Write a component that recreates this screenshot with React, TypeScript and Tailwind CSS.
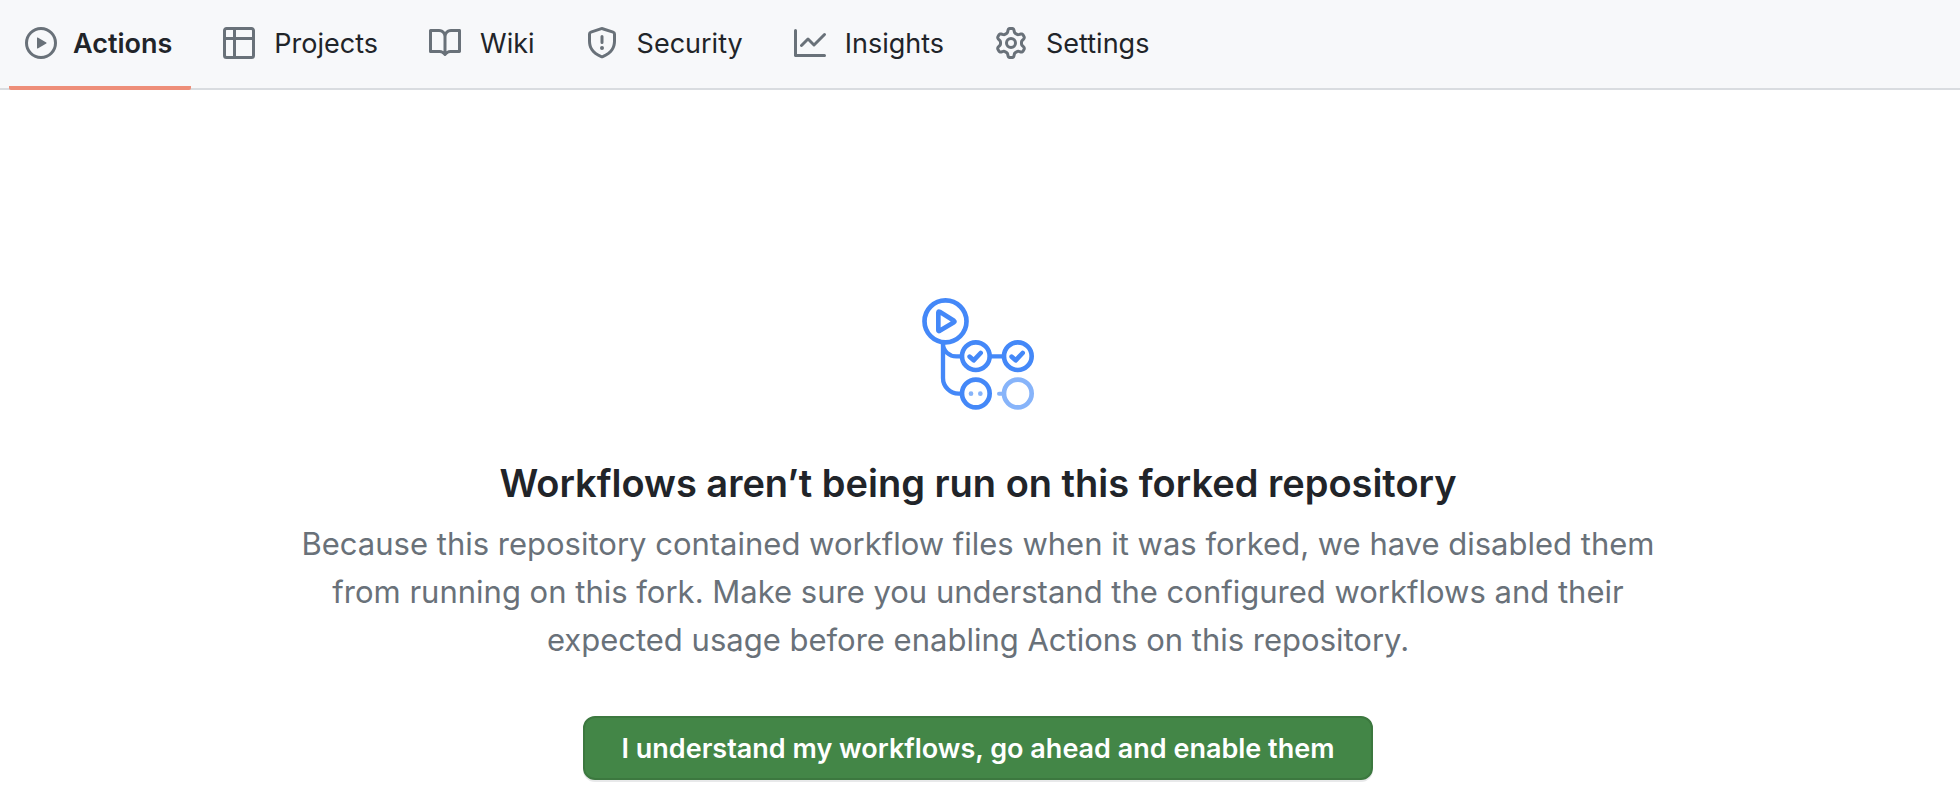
import type { ReactNode } from "react";

type Tab = { label: string; path: string; current?: boolean };

const tabs: Tab[] = [
  {
    label: "Actions",
    current: true,
    path: "M1.5 8a6.5 6.5 0 1113 0 6.5 6.5 0 01-13 0zM8 0a8 8 0 100 16A8 8 0 008 0zM6.379 5.227A.25.25 0 006 5.442v5.117a.25.25 0 00.379.214l4.264-2.559a.25.25 0 000-.428L6.379 5.227z",
  },
  {
    label: "Projects",
    path: "M0 1.75C0 .784.784 0 1.75 0h12.5C15.216 0 16 .784 16 1.75v12.5A1.75 1.75 0 0114.25 16H1.75A1.75 1.75 0 010 14.25V1.75zM1.5 6.5v7.75c0 .138.112.25.25.25H5v-8H1.5zM6.5 6.5v8h7.75a.25.25 0 00.25-.25V6.5h-8zM14.5 5V1.75a.25.25 0 00-.25-.25H6.5V5h8zM5 5V1.5H1.75a.25.25 0 00-.25.25V5H5z",
  },
  {
    label: "Wiki",
    path: "M0 1.75A.75.75 0 01.75 1h4.253c1.227 0 2.317.59 3 1.501A3.744 3.744 0 0111.006 1h4.245a.75.75 0 01.75.75v10.5a.75.75 0 01-.75.75h-4.507a2.25 2.25 0 00-1.591.659l-.622.621a.75.75 0 01-1.06 0l-.622-.621A2.25 2.25 0 005.258 13H.75a.75.75 0 01-.75-.75V1.75zm8.755 3a2.25 2.25 0 012.25-2.25H14.5v9h-3.757c-.71 0-1.4.201-1.992.572l.004-7.322zm-1.504 7.324l.004-5.073-.002-2.253A2.25 2.25 0 005.003 2.5H1.5v9h3.757a3.75 3.75 0 011.994.574z",
  },
  {
    label: "Security",
    path: "M7.467.133a1.75 1.75 0 011.066 0l5.25 1.68A1.75 1.75 0 0115 3.48V7c0 1.566-.32 3.182-1.303 4.682-.983 1.498-2.585 2.813-5.032 3.855a1.7 1.7 0 01-1.33 0c-2.447-1.042-4.049-2.357-5.032-3.855C1.32 10.182 1 8.566 1 7V3.48a1.75 1.75 0 011.217-1.667l5.25-1.68zm.61 1.429a.25.25 0 00-.153 0l-5.25 1.68a.25.25 0 00-.174.238V7c0 1.358.275 2.666 1.057 3.86.784 1.194 2.121 2.34 4.366 3.297a.2.2 0 00.154 0c2.245-.956 3.582-2.104 4.366-3.298C13.225 9.666 13.5 8.36 13.5 7V3.48a.25.25 0 00-.174-.237l-5.25-1.68zM9 10.5a1 1 0 11-2 0 1 1 0 012 0zm-.25-5.75a.75.75 0 10-1.5 0v3a.75.75 0 001.5 0v-3z",
  },
  {
    label: "Insights",
    path: "M1.5 1.75a.75.75 0 00-1.5 0v12.5c0 .414.336.75.75.75h14.5a.75.75 0 000-1.5H1.5V1.75zm14.28 2.53a.75.75 0 00-1.06-1.06L10 7.94 7.53 5.47a.75.75 0 00-1.06 0L3.22 8.72a.75.75 0 001.06 1.06L7 7.06l2.47 2.47a.75.75 0 001.06 0l5.25-5.25z",
  },
  {
    label: "Settings",
    path: "M7.429 1.525a6.593 6.593 0 011.142 0c.036.003.108.036.137.146l.289 1.105c.147.56.55.967.997 1.189.174.086.341.183.501.29.417.278.97.423 1.53.27l1.102-.303c.11-.03.175.016.195.046.219.31.41.641.573.989.014.031.022.11-.059.19l-.815.806c-.411.406-.562.957-.53 1.456a4.588 4.588 0 010 .582c-.032.499.119 1.05.53 1.456l.815.806c.08.08.073.159.059.19a6.494 6.494 0 01-.573.99c-.02.029-.086.074-.195.045l-1.103-.303c-.559-.153-1.112-.008-1.529.27-.16.107-.327.204-.5.29-.449.222-.851.628-.998 1.189l-.289 1.105c-.029.11-.101.143-.137.146a6.613 6.613 0 01-1.142 0c-.036-.003-.108-.037-.137-.146l-.289-1.105c-.147-.56-.55-.967-.997-1.189a4.502 4.502 0 01-.501-.29c-.417-.278-.97-.423-1.53-.27l-1.102.303c-.11.03-.175-.016-.195-.046a6.492 6.492 0 01-.573-.989c-.014-.031-.022-.11.059-.19l.815-.806c.411-.406.562-.957.53-1.456a4.587 4.587 0 010-.582c.032-.499-.119-1.05-.53-1.456l-.815-.806c-.08-.08-.073-.159-.059-.19a6.44 6.44 0 01.573-.99c.02-.029.086-.075.195-.045l1.103.303c.559.153 1.112.008 1.529-.27.16-.107.327-.204.5-.29.449-.222.851-.628.998-1.189l.289-1.105c.029-.11.101-.143.137-.146zM8 0c-.236 0-.47.01-.701.03-.743.065-1.29.615-1.458 1.261l-.29 1.106c-.017.066-.078.158-.211.224a5.994 5.994 0 00-.668.386c-.123.082-.233.09-.3.071L3.27 2.776c-.644-.177-1.392.02-1.82.63a7.977 7.977 0 00-.704 1.217c-.315.675-.111 1.422.363 1.891l.815.806c.05.048.098.147.088.294a6.084 6.084 0 000 .772c.01.147-.038.246-.088.294l-.815.806c-.474.469-.678 1.216-.363 1.891.2.428.436.835.704 1.218.428.609 1.176.806 1.82.63l1.103-.303c.066-.019.176-.011.299.071.213.143.436.272.668.386.133.066.194.158.212.224l.289 1.106c.169.646.715 1.196 1.458 1.26a8.094 8.094 0 001.402 0c.743-.064 1.29-.614 1.458-1.26l.29-1.106c.017-.066.078-.158.211-.224a5.98 5.98 0 00.668-.386c.123-.082.233-.09.3-.071l1.102.302c.644.177 1.392-.02 1.82-.63.268-.382.505-.789.704-1.217.315-.675.111-1.422-.364-1.891l-.814-.806c-.05-.048-.098-.147-.088-.294a6.1 6.1 0 000-.772c-.01-.147.039-.246.088-.294l.814-.806c.475-.469.679-1.216.364-1.891a7.992 7.992 0 00-.704-1.218c-.428-.609-1.176-.806-1.82-.63l-1.103.303c-.066.019-.176.011-.299-.071a5.991 5.991 0 00-.668-.386c-.133-.066-.194-.158-.212-.224L10.16 1.29C9.99.645 9.444.095 8.701.031A8.094 8.094 0 008 0zM11 8a3 3 0 11-6 0 3 3 0 016 0zM9.5 8a1.5 1.5 0 10-3 0 1.5 1.5 0 003 0z",
  },
];

function TabLink({ label, path, current }: Tab) {
  return (
    <a
      href="#"
      aria-current={current ? "page" : undefined}
      className={
        current
          ? "-mb-0.5 flex h-[90px] items-center gap-4 rounded-b-xs border-b-4 border-[#ee8e79] pr-[19px] pl-4 font-semibold"
          : "-mb-0.5 flex h-[90px] items-center gap-[19px] border-b-4 border-transparent pr-[19px] pl-4"
      }
    >
      <svg viewBox="0 0 16 16" className="size-8 shrink-0 fill-[#697179]" aria-hidden="true">
        <path fillRule="evenodd" d={path} />
      </svg>
      <span className="pt-0.5">{label}</span>
    </a>
  );
}

function WorkflowLogo() {
  return (
    <svg viewBox="0 0 336 336" className="size-28" fill="none" strokeLinecap="round" strokeLinejoin="round" aria-hidden="true">
      <g stroke="#4488f8" strokeWidth="14">
        <path strokeWidth="13" d="M63 138v102a47 47 0 0047 47h6M63 138a40 37 0 0040 37h13M206 175h37" />
        <circle cx="70.5" cy="70" r="63" />
        <path d="M49 43.500v53q0 4 4 2l43-26q3-2 0-4l-43-27q-4-2-4 2z" />
        <circle cx="161.500" cy="174.500" r="41.500" />
        <circle cx="287.500" cy="174.500" r="41.500" />
        <circle cx="161.500" cy="286.500" r="41.500" />
        <path d="M143 176l12 11 21-22M269 176l12 11 21-22" />
      </g>
      <g stroke="#87b4fa" strokeWidth="14">
        <circle cx="287.500" cy="286.500" r="41.500" />
        <path strokeWidth="12" d="M231 287h10" />
      </g>
      <circle cx="147" cy="287" r="7" fill="#87b4fa" />
      <circle cx="175" cy="287" r="7" fill="#87b4fa" />
    </svg>
  );
}

function BlankSlate({ title, children }: { title: string; children: ReactNode }) {
  return (
    <main className="flex flex-col items-center px-8 pt-52 pr-9 pb-5 text-center">
      <WorkflowLogo />
      <h1 className="mt-11 text-[38px] leading-[58px] font-semibold">{title}</h1>
      {children}
    </main>
  );
}

export default function App() {
  return (
    <div className="min-h-screen bg-white font-['Inter','Liberation_Sans',sans-serif] text-[#212429]">
      <nav aria-label="Repository" className="flex gap-4 border-b-2 border-[#d9dce0] bg-[#f7f8fa] pl-[9px] text-[27px]">
        {tabs.map((tab) => (
          <TabLink key={tab.label} {...tab} />
        ))}
      </nav>
      <BlankSlate title="Workflows aren’t being run on this forked repository">
        <p className="mt-2 max-w-[1360px] text-[31px] leading-[48px] text-[#697179]">
          Because this repository contained workflow files when it was forked, we have disabled them from running on
          this fork. Make sure you understand the configured workflows and their expected usage before enabling Actions
          on this repository.
        </p>
        <button
          type="button"
          className="mt-13 h-16 rounded-xl border-2 border-[#3c783f] bg-[#438647] px-9 pt-0.5 text-[27px] font-semibold text-white shadow-[0_2px_0_#e8e9ea]"
        >
          I understand my workflows, go ahead and enable them
        </button>
      </BlankSlate>
    </div>
  );
}
